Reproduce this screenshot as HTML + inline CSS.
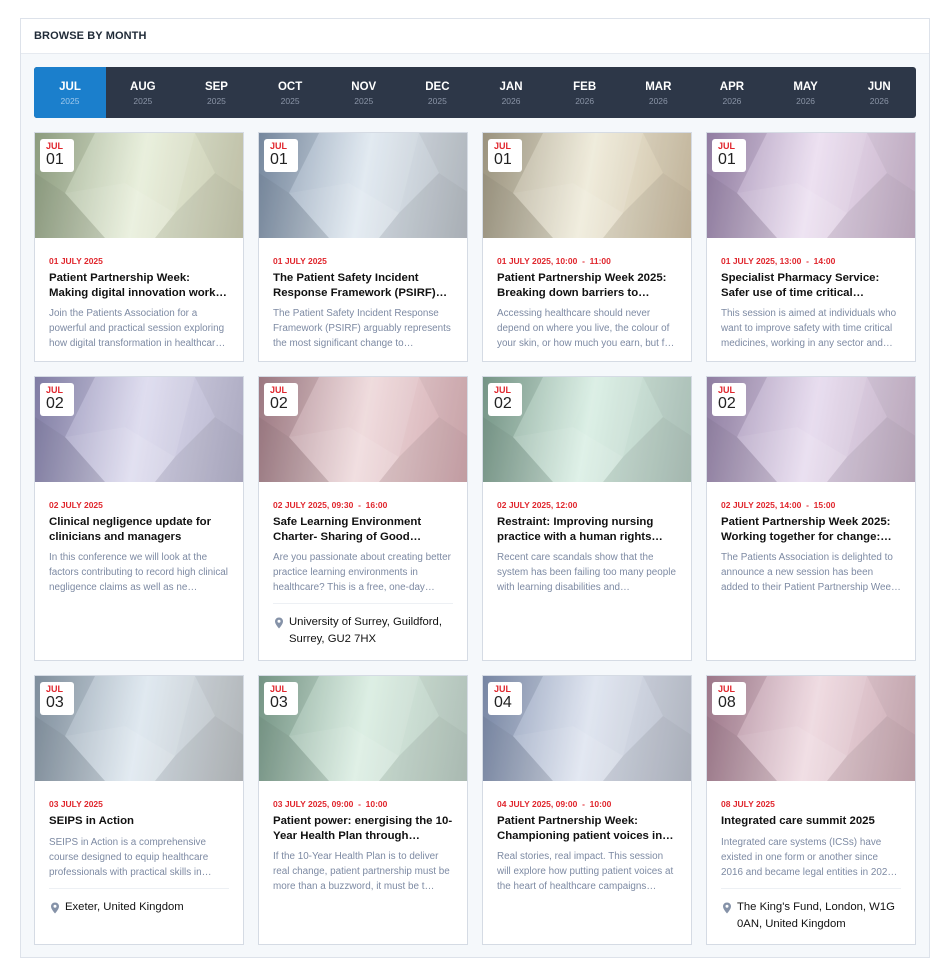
<!DOCTYPE html>
<html><head><meta charset="utf-8"><style>
*{box-sizing:border-box;margin:0;padding:0}
body{width:950px;height:950px;background:#fff;font-family:"Liberation Sans",sans-serif;overflow:hidden;position:relative}
.panel{position:absolute;left:20px;top:18px;width:910px;height:940px;border:1px solid #dde2ea;background:#f5f8fb}
.hd{height:35px;background:#fff;border-bottom:1px solid #e6eaf0;padding:11px 0 0 13px;font-size:11px;font-weight:bold;color:#1f2a37;letter-spacing:.1px}
.months{position:absolute;left:13px;top:48px;width:882px;height:51px;background:#2d3748;border-radius:3px;display:flex;overflow:hidden}
.m{flex:1;text-align:center;color:#fff;font-size:11.5px;font-weight:bold;padding-top:14px}
.m span{display:block;font-size:8.5px;font-weight:normal;color:#8a94a6;margin-top:3px}
.m.a{background:#1b7fcc;flex:0 0 72px}
.m.a span{color:#9ec8ec}
.card{position:absolute;width:210px;background:#fff;border:1px solid #d5dbe4}
.img{height:105px;position:relative;overflow:hidden}
.img svg{position:absolute;left:0;top:0}
.badge{position:absolute;left:5px;top:6px;width:34px;height:33px;background:#fff;border-radius:3px;padding:3px 0 0 6px}
.badge b{display:block;color:#e0262d;font-size:9px;line-height:9px}
.badge i{display:block;font-style:normal;font-size:16px;color:#222;line-height:18px}
.bd{padding:18px 14px 0 14px}
.dt{font-size:8.5px;font-weight:bold;color:#e0262d;line-height:11px;white-space:nowrap}
.tt{font-size:11.4px;font-weight:bold;color:#111;line-height:14.5px;margin-top:4px;display:-webkit-box;-webkit-line-clamp:2;-webkit-box-orient:vertical;overflow:hidden}
.ds{font-size:9.9px;color:#7d8aa3;line-height:15px;margin-top:6px;display:-webkit-box;-webkit-line-clamp:3;-webkit-box-orient:vertical;overflow:hidden}
.sep{border-top:1px solid #edf0f4;margin-top:8px}
.loc{position:relative;padding:10px 0 0 16px;font-size:11.3px;color:#111;line-height:17px}
.loc svg{position:absolute;left:1px;top:13px}
</style></head><body>
<div class="panel">
<div class="hd">BROWSE BY MONTH</div>
<div class="months">
<div class="m a">JUL<span>2025</span></div>
<div class="m">AUG<span>2025</span></div>
<div class="m">SEP<span>2025</span></div>
<div class="m">OCT<span>2025</span></div>
<div class="m">NOV<span>2025</span></div>
<div class="m">DEC<span>2025</span></div>
<div class="m">JAN<span>2026</span></div>
<div class="m">FEB<span>2026</span></div>
<div class="m">MAR<span>2026</span></div>
<div class="m">APR<span>2026</span></div>
<div class="m">MAY<span>2026</span></div>
<div class="m">JUN<span>2026</span></div>
</div>
</div>

<svg width="0" height="0" style="position:absolute"><defs>
<g id="poly">
<polygon points="0,0 60,0 30,60 0,40" fill="#000" opacity=".06"/>
<polygon points="30,60 70,105 0,105 0,40" fill="#000" opacity=".1"/>
<polygon points="60,0 110,0 90,50 30,60" fill="#fff" opacity=".12"/>
<polygon points="90,50 140,80 120,105 70,105 30,60" fill="#fff" opacity=".18"/>
<polygon points="110,0 160,0 140,80 90,50" fill="#fff" opacity=".1"/>
<polygon points="160,0 210,0 210,60 180,40" fill="#000" opacity=".04"/>
<polygon points="140,80 180,40 210,60 210,105 120,105" fill="#000" opacity=".07"/>
</g></defs></svg>

<div id="cards"></div>
<script>
const L='<svg width="10" height="12" viewBox="0 0 10 12"><path d="M5 0.5C2.7 0.5 1 2.2 1 4.4 1 7.3 5 11.5 5 11.5S9 7.3 9 4.4C9 2.2 7.3 0.5 5 0.5Z" fill="#8592a8"/><circle cx="5" cy="4.3" r="1.5" fill="#fff"/></svg>';
const C=[
[["#95a687","#e7eed9","#c6c7ad"],"01","01 JULY 2025","Patient Partnership Week: Making digital innovation work…","Join the Patients Association for a powerful and practical session exploring how digital transformation in healthcar…",""],
[["#7d90a8","#dfe8f0","#b6bcc3"],"01","01 JULY 2025","The Patient Safety Incident Response Framework (PSIRF) &…","The Patient Safety Incident Response Framework (PSIRF) arguably represents the most significant change to…",""],
[["#a49c86","#eeead8","#c9ba9f"],"01","01 JULY 2025, 10:00 &nbsp;-&nbsp; 11:00","Patient Partnership Week 2025: Breaking down barriers to…","Accessing healthcare should never depend on where you live, the colour of your skin, or how much you earn, but f…",""],
[["#9a84ac","#ebdef0","#c4afc6"],"01","01 JULY 2025, 13:00 &nbsp;-&nbsp; 14:00","Specialist Pharmacy Service: Safer use of time critical…","This session is aimed at individuals who want to improve safety with time critical medicines, working in any sector and…",""],
[["#8884ae","#dcdaee","#b3b1c9"],"02","02 JULY 2025","Clinical negligence update for clinicians and managers","In this conference we will look at the factors contributing to record high clinical negligence claims as well as ne…",""],
[["#a57f89","#eed8da","#d0a8ae"],"02","02 JULY 2025, 09:30 &nbsp;-&nbsp; 16:00","Safe Learning Environment Charter- Sharing of Good…","Are you passionate about creating better practice learning environments in healthcare? This is a free, one-day…","University of Surrey, Guildford, Surrey, GU2 7HX"],
[["#7c9e8e","#d8eee3","#b0c5bc"],"02","02 JULY 2025, 12:00","Restraint: Improving nursing practice with a human rights…","Recent care scandals show that the system has been failing too many people with learning disabilities and…",""],
[["#9886ac","#e6daee","#c0adc1"],"02","02 JULY 2025, 14:00 &nbsp;-&nbsp; 15:00","Patient Partnership Week 2025: Working together for change: a…","The Patients Association is delighted to announce a new session has been added to their Patient Partnership Wee…",""],
[["#8797a6","#dde7ef","#b8bcbf"],"03","03 JULY 2025","SEIPS in Action","SEIPS in Action is a comprehensive course designed to equip healthcare professionals with practical skills in…","Exeter, United Kingdom"],
[["#7c9e8d","#d9ede1","#b7c8bf"],"03","03 JULY 2025, 09:00 &nbsp;-&nbsp; 10:00","Patient power: energising the 10-Year Health Plan through…","If the 10-Year Health Plan is to deliver real change, patient partnership must be more than a buzzword, it must be t…",""],
[["#7e8eae","#dde3ef","#b7bcc8"],"04","04 JULY 2025, 09:00 &nbsp;-&nbsp; 10:00","Patient Partnership Week: Championing patient voices in…","Real stories, real impact. This session will explore how putting patient voices at the heart of healthcare campaigns…",""],
[["#a67e92","#eed8df","#c8a8b1"],"08","08 JULY 2025","Integrated care summit 2025","Integrated care systems (ICSs) have existed in one form or another since 2016 and became legal entities in 202…","The King's Fund, London, W1G 0AN, United Kingdom"]
];
const X=[34,258,482,706],Y=[132,376,675],H=[230,285,270];
let h='';
C.forEach((c,i)=>{const r=Math.floor(i/4),k=i%4,g=c[0];
h+=`<div class="card" style="left:${X[k]}px;top:${Y[r]}px;height:${H[r]}px"><div class="img" style="background:linear-gradient(100deg,${g[0]} 0%,${g[1]} 50%,${g[2]} 100%)"><svg width="210" height="105"><use href="#poly"/></svg><div class="badge"><b>JUL</b><i>${c[1]}</i></div></div><div class="bd"><div class="dt">${c[2]}</div><div class="tt">${c[3]}</div><div class="ds">${c[4]}</div>${c[5]?`<div class="sep"></div><div class="loc">${L}${c[5]}</div>`:''}</div></div>`;});
document.getElementById('cards').innerHTML=h;
</script>
</body></html>
